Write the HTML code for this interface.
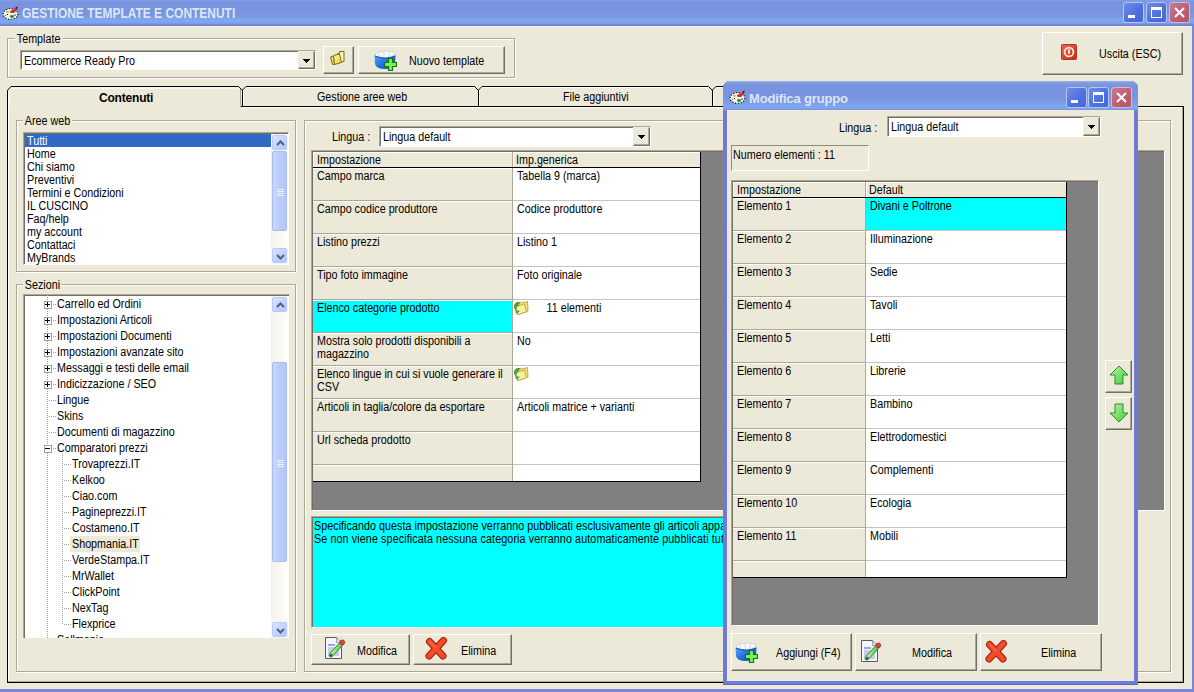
<!DOCTYPE html>
<html><head><meta charset="utf-8">
<style>
*{box-sizing:border-box;margin:0;padding:0}
html,body{width:1194px;height:692px;overflow:hidden;background:#ECE9D8;font-family:"Liberation Sans",sans-serif;font-size:11px;color:#000}
.a{position:absolute}
.t{position:absolute;white-space:nowrap;line-height:13px;letter-spacing:0;font-size:12px;padding-top:1px;transform:scaleX(0.895);transform-origin:0 0}
.btn{position:absolute;background:#ECE9D8;border-top:1px solid #fff;border-left:1px solid #fff;border-right:1px solid #716F64;border-bottom:1px solid #716F64;box-shadow:inset -1px -1px 0 #ACA899}
.sunk{position:absolute;border-top:1px solid #8F8B7C;border-left:1px solid #8F8B7C;border-right:1px solid #fff;border-bottom:1px solid #fff;}
.sunk2{position:absolute;border-top:1px solid #ACA899;border-left:1px solid #ACA899;border-right:1px solid #fff;border-bottom:1px solid #fff;box-shadow:inset 1px 1px 0 #716F64}
.etch{position:absolute;border:1px solid #ACA899;box-shadow:inset 1px 1px 0 #fff,1px 1px 0 #fff}
.lbl{position:absolute;background:#ECE9D8;padding:1px 2px 0 2px;white-space:nowrap;line-height:13px;letter-spacing:0;font-size:12px;transform:scaleX(0.895);transform-origin:0 0}
.combo{position:absolute;background:#fff;border-top:1px solid #ACA899;border-left:1px solid #ACA899;border-right:1px solid #fff;border-bottom:1px solid #fff;box-shadow:inset 1px 1px 0 #716F64}
.drop{position:absolute;top:0;right:0;width:17px;bottom:0;background:#ECE9D8;border-top:1px solid #F1EFE2;border-left:1px solid #F1EFE2;border-right:1px solid #716F64;border-bottom:1px solid #716F64;box-shadow:inset -1px -1px 0 #ACA899}
.tbtn{position:absolute;top:2px;width:21px;height:21px;border:1px solid #B7C7F3;border-radius:3px;background:linear-gradient(135deg,#6E8EEA,#4D6FDE 60%,#4668D8)}
.gridc{position:absolute;overflow:hidden}
.sbb{border:1px solid #B8CBF6;border-radius:2px;box-shadow:0 0 0 1px #F4F6FC;background:linear-gradient(135deg,#DCE6FE,#C2D3FC 50%,#B6C8F6)}
.sbt{border:1px solid #A8BCF0;border-radius:2px;background:linear-gradient(to right,#C9D8FC,#BACCFA 50%,#B2C6F8)}
</style></head><body>

<!-- main title bar -->
<div class="a" style="left:0;top:0;width:1194px;height:26px;background:linear-gradient(to bottom,#80A0E8 0,#7995E0 2px,#7893DF 10px,#7A98E2 16px,#7FA4EC 19px,#80A8EE 22px,#7A96E0 24px,#6E7ED0 25px,#6E7ED0 26px)"></div>
<div class="t" style="left:22px;top:5px;font-size:14px;font-weight:bold;color:#DCE6FA;letter-spacing:0;line-height:15px;transform:scaleX(0.855);transform-origin:0 0">GESTIONE TEMPLATE E CONTENUTI</div>

<div class="tbtn" style="left:1123px"><div class="a" style="left:4px;top:12px;width:7px;height:3px;background:#fff"></div></div>
<div class="tbtn" style="left:1146px"><div class="a" style="left:4px;top:4px;width:11px;height:11px;border:1px solid #fff;border-top:3px solid #fff"></div></div>
<div class="tbtn" style="left:1169px;background:linear-gradient(135deg,#CC7A8C,#BE5E72 55%,#B45468);border-color:#D8B8CC"><svg class="a" style="left:4px;top:4px" width="11" height="11"><path d="M1 1L10 10M10 1L1 10" stroke="#fff" stroke-width="2"/></svg></div>


<!-- title icon -->
<svg class="a" style="left:1px;top:5px" width="18" height="16" viewBox="0 0 18 16"><ellipse cx="9.5" cy="9" rx="7.3" ry="5.3" fill="#F6F8F0" stroke="#000" stroke-width="1.1" stroke-dasharray="1.1 1.7"/><ellipse cx="6.5" cy="6.8" rx="1.8" ry="1.1" fill="#D8C020"/><path d="M9 6 L14 3.5 L16.5 2 L16 5 L13 8 L9.5 8 Z" fill="#D83018"/><path d="M14 3 L16.5 1.5 L16 4" fill="#300"/><ellipse cx="11" cy="11.5" rx="2" ry="1.4" fill="#18902A"/><ellipse cx="14" cy="10" rx="1.3" ry="1" fill="#5AA8A0"/><path d="M4.5 10.5 L6 9.3 L7.5 10" stroke="#000" stroke-width="1" stroke-dasharray="1 1" fill="none"/></svg>

<!-- Template groupbox -->
<div class="etch" style="left:7px;top:38px;width:508px;height:40px"></div>
<div class="lbl" style="left:15px;top:32px">Template</div>
<div class="combo" style="left:20px;top:50px;width:296px;height:20px"><div class="t" style="left:3px;top:3px">Ecommerce Ready Pro</div><div class="drop"><svg class="a" style="left:4px;top:7px" width="8" height="5" shape-rendering="crispEdges"><path d="M0 0h7v1h-1v1h-1v1h-1v1h-1v-1h-1v-1h-1v-1h-1z" fill="#000"/></svg></div></div>
<div class="btn" style="left:323px;top:46px;width:31px;height:28px">
<svg class="a" style="left:5px;top:3px" width="17" height="17" viewBox="0 0 17 17"><defs><linearGradient id="fy" x1="0" y1="0" x2="1" y2="1"><stop offset="0" stop-color="#FFF8B8"/><stop offset="1" stop-color="#E8D028"/></linearGradient></defs><path d="M8.5 3.5 L10.5 3.5 L10.5 1.5 L15 1.5 L15 11.5 L9 13 Z" fill="#FBF4B0" stroke="#7E6E18" stroke-width="1"/><path d="M1.5 7 L4.5 6 L5.5 14.5 L3.5 14.5 Z" fill="#F4E470" stroke="#7E6E18" stroke-width="1"/><path d="M4.5 5.5 L10.5 4 L12.5 12.5 L5.5 14.5 Z" fill="url(#fy)" stroke="#7E6E18" stroke-width="1"/></svg>
</div>
<div class="btn" style="left:358px;top:46px;width:147px;height:28px">
<svg class="a" style="left:15px;top:2px" width="23" height="22" viewBox="0 0 23 22"><defs><linearGradient id="bg4" x1="0" y1="0" x2="1" y2="1"><stop offset="0" stop-color="#5AA8F8"/><stop offset="0.5" stop-color="#2070E0"/><stop offset="1" stop-color="#1448B0"/></linearGradient></defs><path d="M2 4 L6 2 L9 3 L12 1.5 L16 2.5 L19 2 L21 6 L12 9 L1 7 Z" fill="#FAFAFA" stroke="#C8CCD8" stroke-width="0.8"/><path d="M5 3 V7 M10 3 V8 M15 3 V8" stroke="#C0C4CC" stroke-width="0.7"/><path d="M0.5 6.5 Q11 11 21.5 6.5 L21 16 Q18 20 11 20 Q2 20 1 15 Z" fill="url(#bg4)"/><path d="M1 7 Q11 11.5 21.5 7" stroke="#1A50B8" stroke-width="1" fill="none"/><path d="M14 11.5 H17.5 V8 H21.5 V11.5 H22 V15.5 H21.5 V19 H17.5 V21.5 H14 V19 H10.5 V15.5 H14 Z" fill="none"/><path d="M14.5 9.5 H18.5 V13.5 H22.5 V17.5 H18.5 V21.5 H14.5 V17.5 H10.5 V13.5 H14.5 Z" fill="#7CF05C" stroke="#0E7A0E" stroke-width="1.2"/></svg>
<div class="t" style="left:50px;top:7px">Nuovo template</div>
</div>

<!-- Uscita -->
<div class="btn" style="left:1042px;top:32px;width:141px;height:43px">
<svg class="a" style="left:18px;top:11px" width="16" height="16" viewBox="0 0 16 16"><defs><linearGradient id="rg" x1="0" y1="0" x2="1" y2="1"><stop offset="0" stop-color="#E86858"/><stop offset="1" stop-color="#C42A18"/></linearGradient></defs><rect x="0.5" y="0.5" width="15" height="15" rx="1" fill="url(#rg)" stroke="#B83020"/><circle cx="8" cy="8" r="4.4" fill="none" stroke="#FDE6D0" stroke-width="1.8"/><rect x="7" y="5" width="2" height="5" rx="0.8" fill="#FDE6D0"/></svg>
<div class="t" style="left:56px;top:14px">Uscita (ESC)</div>
</div>


<!-- tabs + page -->
<svg class="a" style="left:0;top:80px" width="1194" height="610" shape-rendering="crispEdges">
<g fill="none" stroke-width="1">
<!-- page inner highlight/shadow -->
<path d="M8.5 602 V10 M242 27.5 H1182" stroke="#fff"/>
<path d="M1182.5 27 V601.5 H8" stroke="#ACA899"/>
<!-- page outer black -->
<path d="M7.5 10 V602.5 H1183.5 V26.5 H241" stroke="#000"/>
<!-- Contenuti tab -->
<path d="M9 27 V10.5 L11.5 8 H238" stroke="#fff" shape-rendering="auto"/>
<path d="M240.5 9 V27" stroke="#ACA899"/>
<path d="M7.5 10.5 L11 6.5 H238.5 L242 10" stroke="#000" shape-rendering="auto"/>
<!-- Gestione tab -->
<path d="M243.5 26 V10 L246 7.5 H474" stroke="#fff" shape-rendering="auto"/>
<path d="M242.5 27 V10 L246 6.5 H474.5 L478 10" stroke="#000" shape-rendering="auto"/>
<!-- File tab -->
<path d="M479.5 26 V10 L482 7.5 H708" stroke="#fff" shape-rendering="auto"/>
<path d="M478.5 27 V10 L482 6.5 H708.5 L712 10" stroke="#000" shape-rendering="auto"/>
<!-- 4th tab -->
<path d="M713.5 26 V10 L716 7.5 H730" stroke="#fff" shape-rendering="auto"/>
<path d="M712.5 27 V10 L716 6.5 H730" stroke="#000" shape-rendering="auto"/>
</g>
</svg>
<div class="t" style="left:99px;top:91px;font-weight:bold;letter-spacing:-0.2px;transform:none">Contenuti</div>
<div class="t" style="left:316.5px;top:90px">Gestione aree web</div>
<div class="t" style="left:563px;top:90px">File aggiuntivi</div>

<!-- Aree web -->
<div class="etch" style="left:16px;top:120px;width:280px;height:152px"></div>
<div class="lbl" style="left:23px;top:114px">Aree web</div>
<div class="sunk2" style="left:23px;top:132px;width:266px;height:133px;background:#fff">
 <div class="a" style="left:1px;top:1px;width:247px;height:13px;background:#316AC5"></div>
 <div class="t" style="left:3px;top:1px;color:#fff">Tutti</div>
 <div class="t" style="left:3px;top:14px">Home</div>
 <div class="t" style="left:3px;top:27px">Chi siamo</div>
 <div class="t" style="left:3px;top:40px">Preventivi</div>
 <div class="t" style="left:3px;top:53px">Termini e Condizioni</div>
 <div class="t" style="left:3px;top:66px">IL CUSCINO</div>
 <div class="t" style="left:3px;top:79px">Faq/help</div>
 <div class="t" style="left:3px;top:92px">my account</div>
 <div class="t" style="left:3px;top:105px">Contattaci</div>
 <div class="t" style="left:3px;top:118px">MyBrands</div>
 <!--SB1--><div class="a" style="left:247px;top:1px;width:17px;height:130px;background:linear-gradient(to right,#F3F1EA,#FEFEFB)"></div>
<div class="a sbb" style="left:248px;top:2px;width:15px;height:15px"><svg class="a" style="left:3px;top:4px" width="9" height="6"><path d="M1 5L4.5 1.5L8 5" stroke="#4D6185" stroke-width="2" fill="none"/></svg></div>
<div class="a sbb" style="left:248px;top:115px;width:15px;height:15px"><svg class="a" style="left:3px;top:5px" width="9" height="6"><path d="M1 1L4.5 4.5L8 1" stroke="#4D6185" stroke-width="2" fill="none"/></svg></div>
<div class="a sbt" style="left:248px;top:18px;width:15px;height:80px"><svg class="a" style="left:3px;top:36px" width="9" height="8"><path d="M1 1.5H8M1 3.5H8M1 5.5H8M1 7.5H8" stroke="#EEF4FE" stroke-width="1"/><path d="M2 2.5H9M2 4.5H9M2 6.5H9" stroke="#8CA6E0" stroke-width="0"/></svg></div><!--/SB1-->
</div>

<!-- Sezioni -->
<div class="etch" style="left:16px;top:284px;width:280px;height:388px"></div>
<div class="lbl" style="left:23px;top:278px">Sezioni</div>
<div class="a" style="left:23px;top:294px;width:266px;height:344px;background:#fff;border-top:1px solid #ACA899;border-left:1px solid #ACA899;box-shadow:inset 1px 1px 0 #716F64;overflow:hidden">
<!--TREE--><svg class="a" style="left:0;top:0" width="266" height="344">
<path d="M23.5 0V344" stroke="#A0A0A0" stroke-dasharray="1 1"/>
<path d="M38.5 158V329" stroke="#A0A0A0" stroke-dasharray="1 1"/>
<path d="M25 9.5H32" stroke="#A0A0A0" stroke-dasharray="1 1"/>
<rect x="20.5" y="6.5" width="7" height="7" fill="#fff" stroke="#A0A0A0"/>
<path d="M21 9.5H26" stroke="#000"/>
<path d="M23.5 7V12" stroke="#000"/>
<path d="M25 25.5H32" stroke="#A0A0A0" stroke-dasharray="1 1"/>
<rect x="20.5" y="22.5" width="7" height="7" fill="#fff" stroke="#A0A0A0"/>
<path d="M21 25.5H26" stroke="#000"/>
<path d="M23.5 23V28" stroke="#000"/>
<path d="M25 41.5H32" stroke="#A0A0A0" stroke-dasharray="1 1"/>
<rect x="20.5" y="38.5" width="7" height="7" fill="#fff" stroke="#A0A0A0"/>
<path d="M21 41.5H26" stroke="#000"/>
<path d="M23.5 39V44" stroke="#000"/>
<path d="M25 57.5H32" stroke="#A0A0A0" stroke-dasharray="1 1"/>
<rect x="20.5" y="54.5" width="7" height="7" fill="#fff" stroke="#A0A0A0"/>
<path d="M21 57.5H26" stroke="#000"/>
<path d="M23.5 55V60" stroke="#000"/>
<path d="M25 73.5H32" stroke="#A0A0A0" stroke-dasharray="1 1"/>
<rect x="20.5" y="70.5" width="7" height="7" fill="#fff" stroke="#A0A0A0"/>
<path d="M21 73.5H26" stroke="#000"/>
<path d="M23.5 71V76" stroke="#000"/>
<path d="M25 89.5H32" stroke="#A0A0A0" stroke-dasharray="1 1"/>
<rect x="20.5" y="86.5" width="7" height="7" fill="#fff" stroke="#A0A0A0"/>
<path d="M21 89.5H26" stroke="#000"/>
<path d="M23.5 87V92" stroke="#000"/>
<path d="M25 105.5H32" stroke="#A0A0A0" stroke-dasharray="1 1"/>
<path d="M25 121.5H32" stroke="#A0A0A0" stroke-dasharray="1 1"/>
<path d="M25 137.5H32" stroke="#A0A0A0" stroke-dasharray="1 1"/>
<path d="M25 153.5H32" stroke="#A0A0A0" stroke-dasharray="1 1"/>
<rect x="20.5" y="150.5" width="7" height="7" fill="#fff" stroke="#A0A0A0"/>
<path d="M21 153.5H26" stroke="#000"/>
<path d="M40 169.5H47" stroke="#A0A0A0" stroke-dasharray="1 1"/>
<path d="M40 185.5H47" stroke="#A0A0A0" stroke-dasharray="1 1"/>
<path d="M40 201.5H47" stroke="#A0A0A0" stroke-dasharray="1 1"/>
<path d="M40 217.5H47" stroke="#A0A0A0" stroke-dasharray="1 1"/>
<path d="M40 233.5H47" stroke="#A0A0A0" stroke-dasharray="1 1"/>
<path d="M40 249.5H47" stroke="#A0A0A0" stroke-dasharray="1 1"/>
<path d="M40 265.5H47" stroke="#A0A0A0" stroke-dasharray="1 1"/>
<path d="M40 281.5H47" stroke="#A0A0A0" stroke-dasharray="1 1"/>
<path d="M40 297.5H47" stroke="#A0A0A0" stroke-dasharray="1 1"/>
<path d="M40 313.5H47" stroke="#A0A0A0" stroke-dasharray="1 1"/>
<path d="M40 329.5H47" stroke="#A0A0A0" stroke-dasharray="1 1"/>
<path d="M25 345.5H32" stroke="#A0A0A0" stroke-dasharray="1 1"/>
</svg>
<div class="t" style="left:33px;top:2px">Carrello ed Ordini</div>
<div class="t" style="left:33px;top:18px">Impostazioni Articoli</div>
<div class="t" style="left:33px;top:34px">Impostazioni Documenti</div>
<div class="t" style="left:33px;top:50px">Impostazioni avanzate sito</div>
<div class="t" style="left:33px;top:66px">Messaggi e testi delle email</div>
<div class="t" style="left:33px;top:82px">Indicizzazione / SEO</div>
<div class="t" style="left:33px;top:98px">Lingue</div>
<div class="t" style="left:33px;top:114px">Skins</div>
<div class="t" style="left:33px;top:130px">Documenti di magazzino</div>
<div class="t" style="left:33px;top:146px">Comparatori prezzi</div>
<div class="t" style="left:48px;top:162px">Trovaprezzi.IT</div>
<div class="t" style="left:48px;top:178px">Kelkoo</div>
<div class="t" style="left:48px;top:194px">Ciao.com</div>
<div class="t" style="left:48px;top:210px">Pagineprezzi.IT</div>
<div class="t" style="left:48px;top:226px">Costameno.IT</div>
<div class="a" style="left:46px;top:241px;width:70px;height:16px;background:#ECE9D8"></div>
<div class="t" style="left:48px;top:242px">Shopmania.IT</div>
<div class="t" style="left:48px;top:258px">VerdeStampa.IT</div>
<div class="t" style="left:48px;top:274px">MrWallet</div>
<div class="t" style="left:48px;top:290px">ClickPoint</div>
<div class="t" style="left:48px;top:306px">NexTag</div>
<div class="t" style="left:48px;top:322px">Flexprice</div>
<div class="t" style="left:33px;top:338px">Sellmania</div>
<div class="a" style="left:247px;top:1px;width:17px;height:342px;background:linear-gradient(to right,#F3F1EA,#FEFEFB)"></div>
<div class="a sbb" style="left:248px;top:2px;width:15px;height:15px"><svg class="a" style="left:3px;top:4px" width="9" height="6"><path d="M1 5L4.5 1.5L8 5" stroke="#4D6185" stroke-width="2" fill="none"/></svg></div>
<div class="a sbb" style="left:248px;top:327px;width:15px;height:15px"><svg class="a" style="left:3px;top:5px" width="9" height="6"><path d="M1 1L4.5 4.5L8 1" stroke="#4D6185" stroke-width="2" fill="none"/></svg></div>
<div class="a sbt" style="left:248px;top:67px;width:15px;height:200px"><svg class="a" style="left:3px;top:96px" width="9" height="8"><path d="M1 1.5H8M1 3.5H8M1 5.5H8M1 7.5H8" stroke="#EEF4FE" stroke-width="1"/><path d="M2 2.5H9M2 4.5H9M2 6.5H9" stroke="#8CA6E0" stroke-width="0"/></svg></div><!--/TREE-->
</div>

<!--RIGHT-->
<div class="etch" style="left:304px;top:120px;width:867px;height:552px"></div>
<div class="t" style="left:332px;top:130px">Lingua :</div>
<div class="combo" style="left:379px;top:126px;width:272px;height:21px"><div class="t" style="left:3px;top:3px">Lingua default</div><div class="drop"><svg class="a" style="left:4px;top:7px" width="8" height="5" shape-rendering="crispEdges"><path d="M0 0h7v1h-1v1h-1v1h-1v1h-1v-1h-1v-1h-1v-1h-1z" fill="#000"/></svg></div></div>
<div class="a" style="left:311px;top:150px;width:854px;height:361px;background:#808080;border-top:1px solid #ACA899;border-left:1px solid #ACA899;border-right:1px solid #fff;border-bottom:1px solid #fff;box-shadow:inset 1px 1px 0 #716F64"></div>
<div class="a" style="left:313px;top:152px;width:387px;height:15px;background:#ECE9D8;border-top:1px solid #fff;border-left:1px solid #fff"></div>
<div class="a" style="left:512px;top:152px;width:1px;height:15px;background:#ACA899"></div>
<div class="a" style="left:513px;top:153px;width:1px;height:14px;background:#fff"></div>
<div class="t" style="left:316.5px;top:153px">Impostazione</div>
<div class="t" style="left:516px;top:153px">Imp.generica</div>
<div class="a" style="left:313px;top:167px;width:387px;height:1px;background:#000"></div>
<div class="a" style="left:313px;top:168px;width:199px;height:313px;background:#ECE9D8"></div>
<div class="a" style="left:512px;top:168px;width:1px;height:313px;background:#ACA899"></div>
<div class="a" style="left:513px;top:168px;width:187px;height:313px;background:#fff"></div>
<div class="a" style="left:313px;top:300px;width:199px;height:32px;background:#00FFFF"></div>
<div class="a" style="left:313px;top:168px;width:199px;height:1px;background:#fff"></div>
<div class="a" style="left:313px;top:200px;width:199px;height:1px;background:#ACA899"></div>
<div class="a" style="left:313px;top:201px;width:199px;height:1px;background:#fff"></div>
<div class="a" style="left:513px;top:200px;width:187px;height:1px;background:#C4C4C4"></div>
<div class="a" style="left:313px;top:233px;width:199px;height:1px;background:#ACA899"></div>
<div class="a" style="left:313px;top:234px;width:199px;height:1px;background:#fff"></div>
<div class="a" style="left:513px;top:233px;width:187px;height:1px;background:#C4C4C4"></div>
<div class="a" style="left:313px;top:266px;width:199px;height:1px;background:#ACA899"></div>
<div class="a" style="left:313px;top:267px;width:199px;height:1px;background:#fff"></div>
<div class="a" style="left:513px;top:266px;width:187px;height:1px;background:#C4C4C4"></div>
<div class="a" style="left:313px;top:299px;width:199px;height:1px;background:#ACA899"></div>
<div class="a" style="left:313px;top:300px;width:199px;height:1px;background:#fff"></div>
<div class="a" style="left:513px;top:299px;width:187px;height:1px;background:#C4C4C4"></div>
<div class="a" style="left:313px;top:332px;width:199px;height:1px;background:#ACA899"></div>
<div class="a" style="left:313px;top:333px;width:199px;height:1px;background:#fff"></div>
<div class="a" style="left:513px;top:332px;width:187px;height:1px;background:#C4C4C4"></div>
<div class="a" style="left:313px;top:365px;width:199px;height:1px;background:#ACA899"></div>
<div class="a" style="left:313px;top:366px;width:199px;height:1px;background:#fff"></div>
<div class="a" style="left:513px;top:365px;width:187px;height:1px;background:#C4C4C4"></div>
<div class="a" style="left:313px;top:398px;width:199px;height:1px;background:#ACA899"></div>
<div class="a" style="left:313px;top:399px;width:199px;height:1px;background:#fff"></div>
<div class="a" style="left:513px;top:398px;width:187px;height:1px;background:#C4C4C4"></div>
<div class="a" style="left:313px;top:431px;width:199px;height:1px;background:#ACA899"></div>
<div class="a" style="left:313px;top:432px;width:199px;height:1px;background:#fff"></div>
<div class="a" style="left:513px;top:431px;width:187px;height:1px;background:#C4C4C4"></div>
<div class="a" style="left:313px;top:464px;width:199px;height:1px;background:#ACA899"></div>
<div class="a" style="left:313px;top:465px;width:199px;height:1px;background:#fff"></div>
<div class="a" style="left:513px;top:464px;width:187px;height:1px;background:#C4C4C4"></div>
<div class="t" style="left:316.5px;top:169px">Campo marca</div>
<div class="t" style="left:516.5px;top:169px">Tabella 9 (marca)</div>
<div class="t" style="left:316.5px;top:202px">Campo codice produttore</div>
<div class="t" style="left:516.5px;top:202px">Codice produttore</div>
<div class="t" style="left:316.5px;top:235px">Listino prezzi</div>
<div class="t" style="left:516.5px;top:235px">Listino 1</div>
<div class="t" style="left:316.5px;top:268px">Tipo foto immagine</div>
<div class="t" style="left:516.5px;top:268px">Foto originale</div>
<div class="t" style="left:316.5px;top:301px">Elenco categorie prodotto</div>
<div class="t" style="left:516.5px;top:301px"><svg class="a" style="left:-4.5px;top:-1px" width="18" height="16" viewBox="0 0 16 16" preserveAspectRatio="none"><path d="M3 4 L8 2 L9 3 L14 1.5 L14.5 11 L4 14.5 Z" fill="#F6E27A" stroke="#B49A30" stroke-width="0.8"/><path d="M2.5 6.5 L11 4 L13 12 L4 14.5 Z" fill="#FBEFA0" stroke="#B49A30" stroke-width="0.8"/><path d="M1 6 Q2 1.5 6 2.5 L5 4.5 L1.5 9 Z" fill="#3DB83D" stroke="#1F7A1F" stroke-width="0.7"/><path d="M2 9 L3 13 L6 11" fill="#4FC84F" stroke="#1F7A1F" stroke-width="0.7"/></svg><span style="position:absolute;left:33px;top:1px">11 elementi</span></div>
<div class="t" style="left:316.5px;top:334px">Mostra solo prodotti disponibili a<br>magazzino</div>
<div class="t" style="left:516.5px;top:334px">No</div>
<div class="t" style="left:316.5px;top:367px">Elenco lingue in cui si vuole generare il<br>CSV</div>
<div class="t" style="left:516.5px;top:367px"><svg class="a" style="left:-4.5px;top:-1px" width="18" height="16" viewBox="0 0 16 16" preserveAspectRatio="none"><path d="M3 4 L8 2 L9 3 L14 1.5 L14.5 11 L4 14.5 Z" fill="#F6E27A" stroke="#B49A30" stroke-width="0.8"/><path d="M2.5 6.5 L11 4 L13 12 L4 14.5 Z" fill="#FBEFA0" stroke="#B49A30" stroke-width="0.8"/><path d="M1 6 Q2 1.5 6 2.5 L5 4.5 L1.5 9 Z" fill="#3DB83D" stroke="#1F7A1F" stroke-width="0.7"/><path d="M2 9 L3 13 L6 11" fill="#4FC84F" stroke="#1F7A1F" stroke-width="0.7"/></svg></div>
<div class="t" style="left:316.5px;top:400px">Articoli in taglia/colore da esportare</div>
<div class="t" style="left:516.5px;top:400px">Articoli matrice + varianti</div>
<div class="t" style="left:316.5px;top:433px">Url scheda prodotto</div>
<div class="a" style="left:700px;top:152px;width:1px;height:330px;background:#000"></div>
<div class="a" style="left:313px;top:481px;width:388px;height:1px;background:#000"></div>
<div class="a" style="left:311px;top:516px;width:800px;height:112px;background:#00FFFF;border-top:1px solid #ACA899;border-left:1px solid #ACA899;border-right:1px solid #fff;border-bottom:1px solid #fff;box-shadow:inset 1px 1px 0 #716F64"></div>
<div class="t" style="left:314px;top:519px;letter-spacing:0.05px">Specificando questa impostazione verranno pubblicati esclusivamente gli articoli appartenenti alle categorie selezionate.</div>
<div class="t" style="left:314px;top:532px;letter-spacing:0.12px">Se non viene specificata nessuna categoria verranno automaticamente pubblicati tutti gli articoli.</div>
<div class="btn" style="left:311px;top:634px;width:99px;height:31px"><svg class="a" style="left:13px;top:2px" width="22" height="23" viewBox="0 0 22 23"><defs><linearGradient id="pg1" x1="0" y1="0" x2="1" y2="0"><stop offset="0" stop-color="#B8F8A0"/><stop offset="1" stop-color="#58C848"/></linearGradient></defs><path d="M0.5 0.5 H11.5 L16.5 5.5 V21.5 H0.5 Z" fill="#F4F6FF" stroke="#555A66" stroke-width="1"/><path d="M11.5 0.5 V5.5 H16.5" fill="#DDE2F0" stroke="#8890A0" stroke-width="0.8"/><rect x="3" y="7" width="7" height="2" fill="#A8A0D8"/><rect x="3" y="10" width="11" height="9" fill="#C8CCEC"/><path d="M6 18 L17 6" stroke="#2E8A2E" stroke-width="4.6" stroke-linecap="round"/><path d="M6 18 L17 6" stroke="url(#pg1)" stroke-width="3" stroke-linecap="round"/><path d="M5 19.5 L7 17" stroke="#303A50" stroke-width="2"/><circle cx="17.3" cy="5.3" r="2.4" fill="#E04040" stroke="#B02020" stroke-width="0.7"/></svg><div class="t" style="left:45px;top:9px">Modifica</div></div>
<div class="btn" style="left:413px;top:634px;width:99px;height:31px"><svg class="a" style="left:11px;top:2px" width="23" height="23" viewBox="0 0 23 23"><path d="M4.5 4.5 L18 19 M18.5 3.5 L4 19" stroke="#9A1E10" stroke-width="7" stroke-linecap="round"/><path d="M4.5 4.5 L18 19 M18.5 3.5 L4 19" stroke="#F44A28" stroke-width="5" stroke-linecap="round"/><path d="M5 5 L11 11" stroke="#FF8060" stroke-width="1.5" stroke-linecap="round" opacity="0.6"/></svg><div class="t" style="left:47px;top:9px">Elimina</div></div>
<!--/RIGHT-->
<!--DLG-->
<div class="a" style="left:723px;top:81px;width:415px;height:604px;background:#7079D6;border-radius:7px 7px 0 0"></div>
<div class="a" style="left:723px;top:81px;width:415px;height:30px;border-radius:7px 7px 0 0;background:linear-gradient(to bottom,#9AB4EE 0,#7E9AE2 2px,#7893DF 6px,#7893DF 14px,#7A99E2 20px,#7FA4EC 24px,#80A8EE 27px,#7A92DE 29px,#6E7ED0 30px)"></div>
<div class="a" style="left:727px;top:110px;width:407px;height:571px;background:#ECE9D8;box-shadow:inset 1px 0 0 #E6ECFA,inset -1px 0 0 #E6ECFA,inset 0 -1px 0 #E6ECFA"></div>
<div class="a" style="left:723px;top:684px;width:415px;height:1px;background:#5E68C0"></div>
<svg class="a" style="left:728px;top:89px" width="18" height="16" viewBox="0 0 18 16"><ellipse cx="9.5" cy="9" rx="7.3" ry="5.3" fill="#F6F8F0" stroke="#000" stroke-width="1.1" stroke-dasharray="1.1 1.7"/><ellipse cx="6.5" cy="6.8" rx="1.8" ry="1.1" fill="#D8C020"/><path d="M9 6 L14 3.5 L16.5 2 L16 5 L13 8 L9.5 8 Z" fill="#D83018"/><path d="M14 3 L16.5 1.5 L16 4" fill="#300"/><ellipse cx="11" cy="11.5" rx="2" ry="1.4" fill="#18902A"/><ellipse cx="14" cy="10" rx="1.3" ry="1" fill="#5AA8A0"/><path d="M4.5 10.5 L6 9.3 L7.5 10" stroke="#000" stroke-width="1" stroke-dasharray="1 1" fill="none"/></svg>
<div class="t" style="left:749px;top:90px;font-size:13px;font-weight:bold;color:#DCE6FA;letter-spacing:-0.15px;line-height:15px;transform:none">Modifica gruppo</div>
<div class="tbtn" style="left:1066px;top:87px;width:21px;height:21px"><div class="a" style="left:4px;top:12px;width:7px;height:3px;background:#fff"></div></div>
<div class="tbtn" style="left:1088px;top:87px;width:21px;height:21px"><div class="a" style="left:4px;top:4px;width:11px;height:11px;border:1px solid #fff;border-top:3px solid #fff"></div></div>
<div class="tbtn" style="left:1111px;top:87px;width:21px;height:21px;background:linear-gradient(135deg,#CC7A8C,#BE5E72 55%,#B45468);border-color:#D8B8CC"><svg class="a" style="left:4px;top:4px" width="11" height="11"><path d="M1 1L10 10M10 1L1 10" stroke="#fff" stroke-width="2"/></svg></div>
<div class="t" style="left:839px;top:121px">Lingua :</div>
<div class="combo" style="left:887px;top:116px;width:214px;height:21px"><div class="t" style="left:3px;top:3px">Lingua default</div><div class="drop"><svg class="a" style="left:4px;top:7px" width="8" height="5" shape-rendering="crispEdges"><path d="M0 0h7v1h-1v1h-1v1h-1v1h-1v-1h-1v-1h-1v-1h-1z" fill="#000"/></svg></div></div>
<div class="sunk" style="left:731px;top:145px;width:138px;height:26px"></div>
<div class="t" style="left:733px;top:148px">Numero elementi : 11</div>
<div class="a" style="left:731px;top:180px;width:368px;height:446px;background:#808080;border-top:1px solid #ACA899;border-left:1px solid #ACA899;border-right:1px solid #fff;border-bottom:1px solid #fff;box-shadow:inset 1px 1px 0 #716F64"></div>
<div class="a" style="left:733px;top:182px;width:333px;height:15px;background:#ECE9D8;border-top:1px solid #fff;border-left:1px solid #fff"></div>
<div class="a" style="left:865px;top:182px;width:1px;height:15px;background:#ACA899"></div>
<div class="a" style="left:866px;top:183px;width:1px;height:14px;background:#fff"></div>
<div class="t" style="left:736.5px;top:183px">Impostazione</div>
<div class="t" style="left:869px;top:183px">Default</div>
<div class="a" style="left:733px;top:197px;width:333px;height:1px;background:#000"></div>
<div class="a" style="left:733px;top:198px;width:132px;height:379px;background:#ECE9D8"></div>
<div class="a" style="left:865px;top:198px;width:1px;height:379px;background:#ACA899"></div>
<div class="a" style="left:866px;top:198px;width:200px;height:379px;background:#fff"></div>
<div class="a" style="left:866px;top:198px;width:200px;height:32px;background:#00FFFF"></div>
<div class="a" style="left:733px;top:198px;width:132px;height:1px;background:#fff"></div>
<div class="a" style="left:733px;top:230px;width:132px;height:1px;background:#ACA899"></div>
<div class="a" style="left:733px;top:231px;width:132px;height:1px;background:#fff"></div>
<div class="a" style="left:866px;top:230px;width:200px;height:1px;background:#C4C4C4"></div>
<div class="a" style="left:733px;top:263px;width:132px;height:1px;background:#ACA899"></div>
<div class="a" style="left:733px;top:264px;width:132px;height:1px;background:#fff"></div>
<div class="a" style="left:866px;top:263px;width:200px;height:1px;background:#C4C4C4"></div>
<div class="a" style="left:733px;top:296px;width:132px;height:1px;background:#ACA899"></div>
<div class="a" style="left:733px;top:297px;width:132px;height:1px;background:#fff"></div>
<div class="a" style="left:866px;top:296px;width:200px;height:1px;background:#C4C4C4"></div>
<div class="a" style="left:733px;top:329px;width:132px;height:1px;background:#ACA899"></div>
<div class="a" style="left:733px;top:330px;width:132px;height:1px;background:#fff"></div>
<div class="a" style="left:866px;top:329px;width:200px;height:1px;background:#C4C4C4"></div>
<div class="a" style="left:733px;top:362px;width:132px;height:1px;background:#ACA899"></div>
<div class="a" style="left:733px;top:363px;width:132px;height:1px;background:#fff"></div>
<div class="a" style="left:866px;top:362px;width:200px;height:1px;background:#C4C4C4"></div>
<div class="a" style="left:733px;top:395px;width:132px;height:1px;background:#ACA899"></div>
<div class="a" style="left:733px;top:396px;width:132px;height:1px;background:#fff"></div>
<div class="a" style="left:866px;top:395px;width:200px;height:1px;background:#C4C4C4"></div>
<div class="a" style="left:733px;top:428px;width:132px;height:1px;background:#ACA899"></div>
<div class="a" style="left:733px;top:429px;width:132px;height:1px;background:#fff"></div>
<div class="a" style="left:866px;top:428px;width:200px;height:1px;background:#C4C4C4"></div>
<div class="a" style="left:733px;top:461px;width:132px;height:1px;background:#ACA899"></div>
<div class="a" style="left:733px;top:462px;width:132px;height:1px;background:#fff"></div>
<div class="a" style="left:866px;top:461px;width:200px;height:1px;background:#C4C4C4"></div>
<div class="a" style="left:733px;top:494px;width:132px;height:1px;background:#ACA899"></div>
<div class="a" style="left:733px;top:495px;width:132px;height:1px;background:#fff"></div>
<div class="a" style="left:866px;top:494px;width:200px;height:1px;background:#C4C4C4"></div>
<div class="a" style="left:733px;top:527px;width:132px;height:1px;background:#ACA899"></div>
<div class="a" style="left:733px;top:528px;width:132px;height:1px;background:#fff"></div>
<div class="a" style="left:866px;top:527px;width:200px;height:1px;background:#C4C4C4"></div>
<div class="a" style="left:733px;top:560px;width:132px;height:1px;background:#ACA899"></div>
<div class="a" style="left:733px;top:561px;width:132px;height:1px;background:#fff"></div>
<div class="a" style="left:866px;top:560px;width:200px;height:1px;background:#C4C4C4"></div>
<div class="t" style="left:736.5px;top:199px">Elemento 1</div>
<div class="t" style="left:869.5px;top:199px">Divani e Poltrone</div>
<div class="t" style="left:736.5px;top:232px">Elemento 2</div>
<div class="t" style="left:869.5px;top:232px">Illuminazione</div>
<div class="t" style="left:736.5px;top:265px">Elemento 3</div>
<div class="t" style="left:869.5px;top:265px">Sedie</div>
<div class="t" style="left:736.5px;top:298px">Elemento 4</div>
<div class="t" style="left:869.5px;top:298px">Tavoli</div>
<div class="t" style="left:736.5px;top:331px">Elemento 5</div>
<div class="t" style="left:869.5px;top:331px">Letti</div>
<div class="t" style="left:736.5px;top:364px">Elemento 6</div>
<div class="t" style="left:869.5px;top:364px">Librerie</div>
<div class="t" style="left:736.5px;top:397px">Elemento 7</div>
<div class="t" style="left:869.5px;top:397px">Bambino</div>
<div class="t" style="left:736.5px;top:430px">Elemento 8</div>
<div class="t" style="left:869.5px;top:430px">Elettrodomestici</div>
<div class="t" style="left:736.5px;top:463px">Elemento 9</div>
<div class="t" style="left:869.5px;top:463px">Complementi</div>
<div class="t" style="left:736.5px;top:496px">Elemento 10</div>
<div class="t" style="left:869.5px;top:496px">Ecologia</div>
<div class="t" style="left:736.5px;top:529px">Elemento 11</div>
<div class="t" style="left:869.5px;top:529px">Mobili</div>
<div class="a" style="left:1066px;top:182px;width:1px;height:396px;background:#000"></div>
<div class="a" style="left:733px;top:577px;width:334px;height:1px;background:#000"></div>
<div class="btn" style="left:1105px;top:360px;width:27px;height:33px"><svg class="a" style="left:3px;top:4px" width="20" height="21" viewBox="0 0 20 21"><defs><linearGradient id="ga" x1="0" y1="0" x2="1" y2="1"><stop offset="0" stop-color="#B8F8A0"/><stop offset="1" stop-color="#3CC83C"/></linearGradient></defs><path d="M10 1 L19 10 L14 10 L14 19 L6 19 L6 10 L1 10 Z" fill="url(#ga)" stroke="#2E8A2E" stroke-width="1"/></svg></div>
<div class="btn" style="left:1105px;top:397px;width:27px;height:33px"><svg class="a" style="left:3px;top:5px" width="20" height="21" viewBox="0 0 20 21"><path d="M6 1 L14 1 L14 10 L19 10 L10 19 L1 10 L6 10 Z" fill="url(#ga)" stroke="#2E8A2E" stroke-width="1"/></svg></div>
<div class="btn" style="left:731px;top:633px;width:121px;height:38px"><svg class="a" style="left:3px;top:7px" width="23" height="22" viewBox="0 0 23 22"><defs><linearGradient id="bg3" x1="0" y1="0" x2="1" y2="1"><stop offset="0" stop-color="#5AA8F8"/><stop offset="0.5" stop-color="#2070E0"/><stop offset="1" stop-color="#1448B0"/></linearGradient></defs><path d="M2 4 L6 2 L9 3 L12 1.5 L16 2.5 L19 2 L21 6 L12 9 L1 7 Z" fill="#FAFAFA" stroke="#C8CCD8" stroke-width="0.8"/><path d="M5 3 V7 M10 3 V8 M15 3 V8" stroke="#C0C4CC" stroke-width="0.7"/><path d="M0.5 6.5 Q11 11 21.5 6.5 L21 16 Q18 20 11 20 Q2 20 1 15 Z" fill="url(#bg3)"/><path d="M1 7 Q11 11.5 21.5 7" stroke="#1A50B8" stroke-width="1" fill="none"/><path d="M14 11.5 H17.5 V8 H21.5 V11.5 H22 V15.5 H21.5 V19 H17.5 V21.5 H14 V19 H10.5 V15.5 H14 Z" fill="none"/><path d="M14.5 9.5 H18.5 V13.5 H22.5 V17.5 H18.5 V21.5 H14.5 V17.5 H10.5 V13.5 H14.5 Z" fill="#7CF05C" stroke="#0E7A0E" stroke-width="1.2"/></svg><div class="t" style="left:44px;top:12px">Aggiungi (F4)</div></div>
<div class="btn" style="left:855px;top:633px;width:122px;height:38px"><svg class="a" style="left:5px;top:6px" width="22" height="23" viewBox="0 0 22 23"><defs><linearGradient id="pg2" x1="0" y1="0" x2="1" y2="0"><stop offset="0" stop-color="#B8F8A0"/><stop offset="1" stop-color="#58C848"/></linearGradient></defs><path d="M0.5 0.5 H11.5 L16.5 5.5 V21.5 H0.5 Z" fill="#F4F6FF" stroke="#555A66" stroke-width="1"/><path d="M11.5 0.5 V5.5 H16.5" fill="#DDE2F0" stroke="#8890A0" stroke-width="0.8"/><rect x="3" y="7" width="7" height="2" fill="#A8A0D8"/><rect x="3" y="10" width="11" height="9" fill="#C8CCEC"/><path d="M6 18 L17 6" stroke="#2E8A2E" stroke-width="4.6" stroke-linecap="round"/><path d="M6 18 L17 6" stroke="url(#pg2)" stroke-width="3" stroke-linecap="round"/><path d="M5 19.5 L7 17" stroke="#303A50" stroke-width="2"/><circle cx="17.3" cy="5.3" r="2.4" fill="#E04040" stroke="#B02020" stroke-width="0.7"/></svg><div class="t" style="left:56px;top:12px">Modifica</div></div>
<div class="btn" style="left:980px;top:633px;width:122px;height:38px"><svg class="a" style="left:4px;top:6px" width="23" height="23" viewBox="0 0 23 23"><path d="M4.5 4.5 L18 19 M18.5 3.5 L4 19" stroke="#9A1E10" stroke-width="7" stroke-linecap="round"/><path d="M4.5 4.5 L18 19 M18.5 3.5 L4 19" stroke="#F44A28" stroke-width="5" stroke-linecap="round"/><path d="M5 5 L11 11" stroke="#FF8060" stroke-width="1.5" stroke-linecap="round" opacity="0.6"/></svg><div class="t" style="left:60px;top:12px">Elimina</div></div>
<!--/DLG-->
<div class="a" style="left:0;top:26px;width:1192px;height:1px;background:#F2F3EA"></div>
<!-- window borders -->
<div class="a" style="left:1192px;top:26px;width:2px;height:666px;background:#7A86DC"></div>
<div class="a" style="left:0;top:689px;width:1194px;height:3px;background:#7A86DC"></div>

</body></html>
